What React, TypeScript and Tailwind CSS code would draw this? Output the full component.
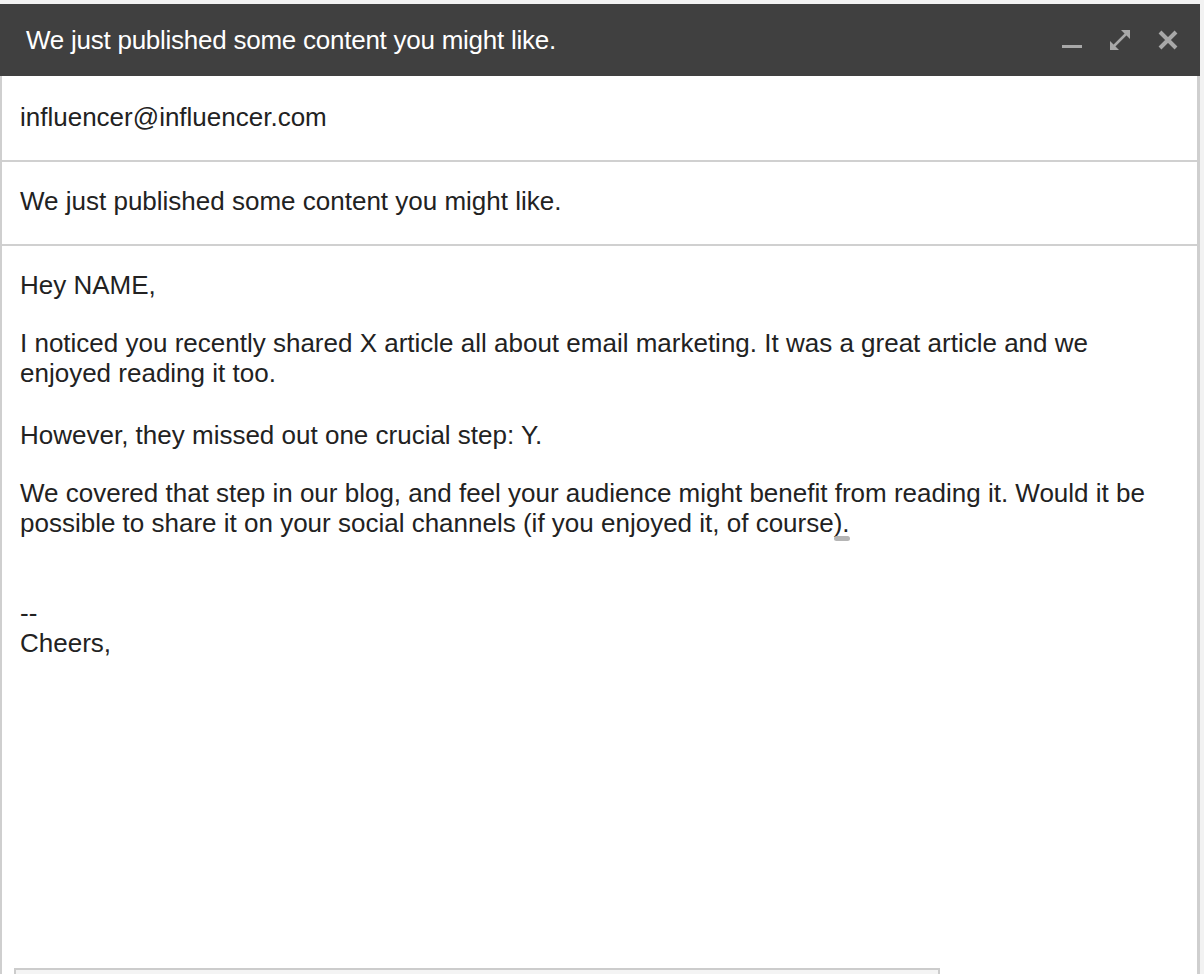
import React from "react";

export default function App() {
  const font = { fontFamily: '"Liberation Sans", Arial, Helvetica, sans-serif' };
  return (
    <div className="w-[1204px] h-[974px] overflow-hidden bg-[#f2f2f2] pt-[4px]" style={font}>
      <div className="w-[1200px] h-[970px] flex flex-col">
        <div className="h-[72px] shrink-0 bg-[#404040] flex items-center pl-[26px] pr-[22px]">
          <div className="flex-1 text-white text-[26px] tracking-[-0.25px]">We just published some content you might like.</div>
          <div className="flex items-center gap-[28px]">
            <svg width="20" height="20" viewBox="0 0 20 20">
              <rect x="0" y="15" width="20" height="3" fill="#a8a8a8" />
            </svg>
            <svg width="20" height="20" viewBox="0 0 20 20">
              <path d="M4 16 L16 4" stroke="#a8a8a8" strokeWidth="2.5" />
              <path d="M11 0 L20 0 L20 9 Z" fill="#a8a8a8" />
              <path d="M0 11 L0 20 L9 20 Z" fill="#a8a8a8" />
            </svg>
            <svg width="20" height="20" viewBox="0 0 20 20">
              <path d="M2 2 L18 18 M18 2 L2 18" stroke="#a8a8a8" strokeWidth="4" />
            </svg>
          </div>
        </div>
        <div className="flex-1 bg-white border-l-[2px] border-r-[3px] border-[#cfcfcf] flex flex-col">
          <div className="h-[86px] shrink-0 border-b-[2px] border-[#d0d0d0] flex items-center pl-[18px] pb-[2px] text-[26px] text-[#222]">
            influencer@influencer.com
          </div>
          <div className="h-[84px] shrink-0 border-b-[2px] border-[#d0d0d0] flex items-center pl-[18px] pb-[4px] text-[26px] text-[#222]">
            We just published some content you might like.
          </div>
          <div className="flex-1 pl-[18px] pr-[30px] pt-[24px] text-[26px] leading-[30px] text-[#222] relative">
            <div>Hey NAME,</div>
            <div className="h-[28px]" />
            <div>I noticed you recently shared X article all about email marketing. It was a great article and we enjoyed reading it too.</div>
            <div className="h-[32px]" />
            <div>However, they missed out one crucial step: Y.</div>
            <div className="h-[28px]" />
            <div>
              We covered that step in our blog, and feel your audience might benefit from reading it. Would it be possible to share it on your social channels (if you enjoyed it, of course).
            </div>
            <div className="absolute left-[832px] top-[290px] w-[16px] h-[5px] rounded-full bg-[#b5b5b5]" />
            <div className="h-[60px]" />
            <div>--</div>
            <div>Cheers,</div>
            <div className="absolute left-[12px] top-[722px] w-[926px] h-[20px] border-[2px] border-[#cccccc] bg-[#f4f4f4]" />
          </div>
        </div>
      </div>
    </div>
  );
}
